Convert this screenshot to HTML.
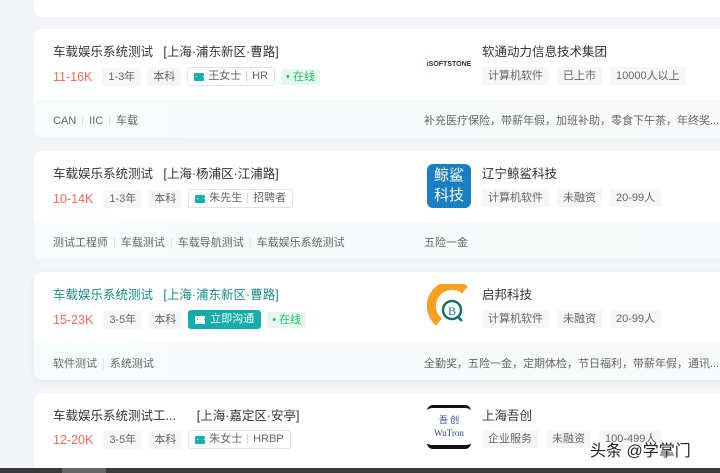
<!DOCTYPE html>
<html><head><meta charset="utf-8"><style>
*{margin:0;padding:0;box-sizing:border-box}
body{width:720px;height:473px;overflow:hidden;background:#f2f4f7;font-family:"Liberation Sans","Noto Sans CJK SC",sans-serif;position:relative;color:#333}
.card{position:absolute;left:34px;width:700px;background:#fff;border-radius:8px;overflow:hidden}
.foot{position:absolute;left:0;right:0;bottom:0;height:37px;background:linear-gradient(90deg,#f6fbfb,#f8f9fa);font-size:11px;color:#666}
.t{position:absolute;left:19px;font-size:12.5px;color:#333;white-space:nowrap}
.row{position:absolute;left:19px;display:flex;align-items:center;gap:6px;font-size:11px;color:#666}
.sal{color:#f26a5a;font-size:12.5px;margin-right:4px}
.tag{background:#f5f6f8;padding:0 6px;height:18px;line-height:18px;border-radius:2px}
.hr{border:1px solid #e0e3e8;height:19px;line-height:17px;padding:0 6px;border-radius:3px;display:flex;align-items:center;gap:4px}
.ic{width:10px;height:8px;background:#17b0b0;border-radius:1px;display:inline-block;position:relative}
.ic:after{content:"";position:absolute;left:2px;top:3px;width:6px;height:1px;border-left:1px solid #fff;border-right:1px solid #fff}
.on{background:#e5f8ee;color:#1fbf6e;height:16px;line-height:16px;padding:0 5px;border-radius:2px}
.chat{background:#16acaa;color:#fff;height:19px;line-height:19px;padding:0 7px;border-radius:3px;display:flex;align-items:center;gap:5px}
.chat .ic{background:#fff}
.chat .ic:after{border-color:#16acaa}
.logo{position:absolute;left:393px;width:44px;height:44px;border-radius:6px;overflow:hidden}
.cn{position:absolute;left:448px;font-size:12.5px;color:#333}
.crow{position:absolute;left:448px;display:flex;gap:8px;font-size:11px;color:#666}
.sep{color:#ddd;margin:0 5px}
.fl{position:absolute;left:19px;top:12px}
.fr{position:absolute;left:390px;top:12px}
</style></head><body>
<div class="card" style="top:-10px;height:27px"></div>

<div class="card" style="top:29px;height:108px">
 <div class="t" style="top:12px">车载娱乐系统测试&nbsp;&nbsp;&nbsp;[上海·浦东新区·曹路]</div>
 <div class="row" style="top:38px"><span class="sal">11-16K</span><span class="tag">1-3年</span><span class="tag">本科</span><span class="hr"><i class="ic"></i>王女士<span style="color:#ccc">|</span>HR</span><span class="on">• 在线</span></div>
 <div class="logo" style="top:13px;background:#fff;display:flex;align-items:center;justify-content:center;font-size:7px;font-weight:bold;color:#333"><span style="color:#c00">i</span>SOFTSTONE</div>
 <div class="cn" style="top:12px">软通动力信息技术集团</div>
 <div class="crow" style="top:38px"><span class="tag">计算机软件</span><span class="tag">已上市</span><span class="tag">10000人以上</span></div>
 <div class="foot"><div class="fl">CAN<span class="sep">|</span>IIC<span class="sep">|</span>车载</div><div class="fr">补充医疗保险，带薪年假，加班补助，零食下午茶，年终奖...</div></div>
</div>

<div class="card" style="top:151px;height:108px">
 <div class="t" style="top:12px">车载娱乐系统测试&nbsp;&nbsp;&nbsp;[上海·杨浦区·江浦路]</div>
 <div class="row" style="top:38px"><span class="sal">10-14K</span><span class="tag">1-3年</span><span class="tag">本科</span><span class="hr"><i class="ic"></i>朱先生<span style="color:#ccc">|</span>招聘者</span></div>
 <div class="logo" style="top:13px;background:#1a7fc1;color:#fff;font-size:15px;line-height:20px;text-align:center;padding-top:2px">鲸鲨<br>科技</div>
 <div class="cn" style="top:12px">辽宁鲸鲨科技</div>
 <div class="crow" style="top:38px"><span class="tag">计算机软件</span><span class="tag">未融资</span><span class="tag">20-99人</span></div>
 <div class="foot"><div class="fl">测试工程师<span class="sep">|</span>车载测试<span class="sep">|</span>车载导航测试<span class="sep">|</span>车载娱乐系统测试</div><div class="fr">五险一金</div></div>
</div>

<div class="card" style="top:272px;height:108px;box-shadow:0 2px 8px rgba(0,0,0,.06)">
 <div class="t" style="top:12px;color:#1a8a8a">车载娱乐系统测试&nbsp;&nbsp;&nbsp;[上海·浦东新区·曹路]</div>
 <div class="row" style="top:38px"><span class="sal">15-23K</span><span class="tag">3-5年</span><span class="tag">本科</span><span class="chat"><i class="ic"></i>立即沟通</span><span class="on">• 在线</span></div>
 <div class="logo" style="top:12px"><svg width="44" height="44"><path d="M38 6 A19 19 0 0 0 12 38" stroke="#f5a021" stroke-width="9" fill="none"/><circle cx="25" cy="26" r="9" fill="none" stroke="#1a6f6a" stroke-width="2.5"/><path d="M31 33 L35 37" stroke="#1a6f6a" stroke-width="2.5"/><text x="21" y="31" font-size="12" fill="#1a6f6a" font-family="Liberation Serif">B</text></svg></div>
 <div class="cn" style="top:12px">启邦科技</div>
 <div class="crow" style="top:38px"><span class="tag">计算机软件</span><span class="tag">未融资</span><span class="tag">20-99人</span></div>
 <div class="foot"><div class="fl">软件测试<span class="sep">|</span>系统测试</div><div class="fr">全勤奖，五险一金，定期体检，节日福利，带薪年假，通讯...</div></div>
</div>

<div class="card" style="top:393px;height:80px">
 <div class="t" style="top:12px">车载娱乐系统测试工...&nbsp;&nbsp;&nbsp;&nbsp;&nbsp;&nbsp;[上海·嘉定区·安亭]</div>
 <div class="row" style="top:37px"><span class="sal">12-20K</span><span class="tag">3-5年</span><span class="tag">本科</span><span class="hr"><i class="ic"></i>朱女士<span style="color:#ccc">|</span>HRBP</span></div>
 <div class="logo" style="top:12px;background:#fff;border-top:3px solid #111;border-bottom:4px solid #111;text-align:center;font-family:'Liberation Serif',serif;font-size:9px;color:#2a4a8a;line-height:13px;padding-top:6px">吾 创<br>WuTron</div>
 <div class="cn" style="top:12px">上海吾创</div>
 <div class="crow" style="top:37px"><span class="tag">企业服务</span><span class="tag">未融资</span><span class="tag">100-499人</span></div>
</div>
<div style="position:absolute;left:590px;top:437px;font-size:16px;color:#222;text-shadow:0 0 3px #fff">头条 @学掌门</div>
<div style="position:absolute;left:0;top:468px;width:720px;height:5px;background:#3a3a3a"></div>
<div style="position:absolute;left:62px;top:468px;width:44px;height:5px;background:#666"></div>
</body></html>
